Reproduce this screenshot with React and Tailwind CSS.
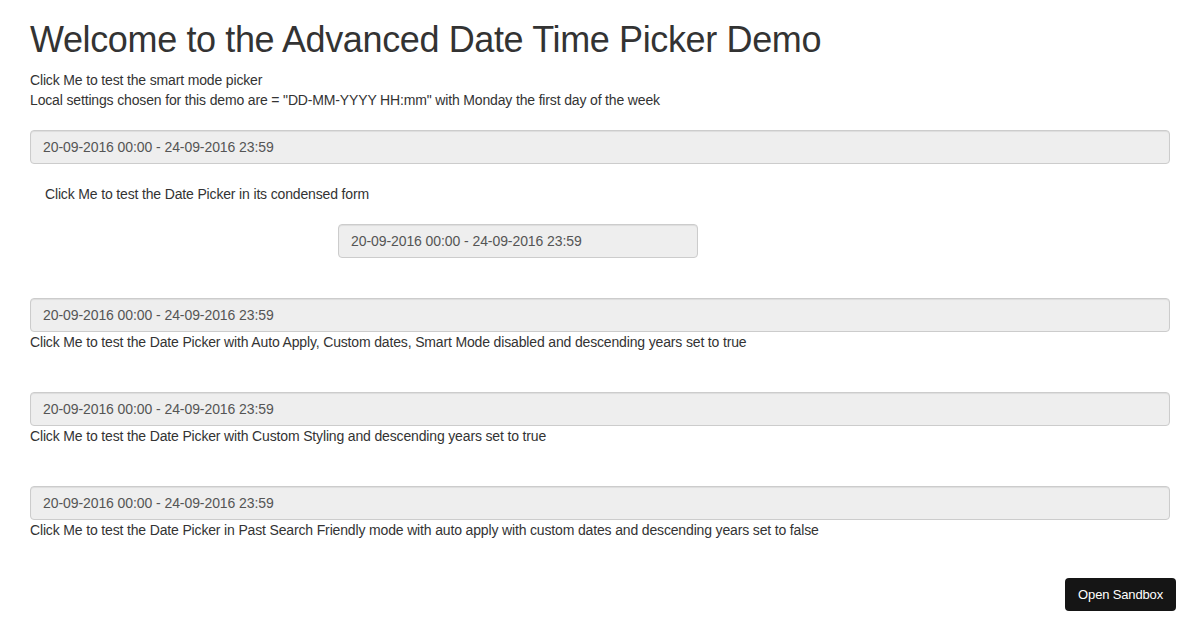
import React from "react";

const VALUE = "20-09-2016 00:00 - 24-09-2016 23:59";

function Field({ className = "" }) {
  return (
    <div
      className={
        "h-[34px] flex items-center px-3 bg-[#eeeeee] border border-[#cccccc] rounded-[4px] text-[14px] tracking-[-0.08px] text-[#555555] shadow-[inset_0_1px_1px_rgba(0,0,0,0.075)] " +
        className
      }
    >
      {VALUE}
    </div>
  );
}

export default function App() {
  return (
    <div
      className="relative w-[1200px] h-[630px] bg-white text-[#333333] text-[14px] leading-[20px] tracking-[-0.011em] overflow-hidden"
      style={{ fontFamily: '"Liberation Sans", Arial, sans-serif' }}
    >
      <div className="px-[30px]">
        <h1 className="mt-[20px] mb-[10px] text-[36px] leading-[39.6px] font-normal tracking-[-0.37px]">
          Welcome to the Advanced Date Time Picker Demo
        </h1>
        <div>Click Me to test the smart mode picker</div>
        <div>
          Local settings chosen for this demo are = "DD-MM-YYYY HH:mm" with Monday the first day of the week
        </div>
        <Field className="mt-[20px]" />
        <div className="mt-[20px] pl-[15px]">Click Me to test the Date Picker in its condensed form</div>
        <Field className="mt-[20px] ml-[308px] w-[360px]" />
        <Field className="mt-[40px]" />
        <div>Click Me to test the Date Picker with Auto Apply, Custom dates, Smart Mode disabled and descending years set to true</div>
        <Field className="mt-[40px]" />
        <div>Click Me to test the Date Picker with Custom Styling and descending years set to true</div>
        <Field className="mt-[40px]" />
        <div>Click Me to test the Date Picker in Past Search Friendly mode with auto apply with custom dates and descending years set to false</div>
      </div>
      <div className="absolute right-[24px] bottom-[19px] h-[33px] px-[13px] flex items-center bg-[#151515] text-white text-[13px] rounded-[4px]">
        Open Sandbox
      </div>
    </div>
  );
}
